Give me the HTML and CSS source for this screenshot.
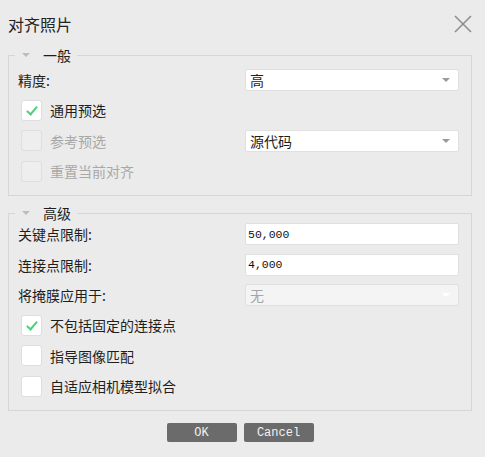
FILE: index.html
```html
<!DOCTYPE html>
<html lang="zh-CN">
<head>
    <meta charset="UTF-8">
    <meta name="viewport" content="width=device-width, initial-scale=1.0">
    <title>对齐照片</title>
    <link rel="stylesheet" href="styles.css">
</head>
<body>
    <div class="dialog">
        <div class="title-bar">
            <span class="title">对齐照片</span>
            <svg class="close" width="18" height="18" viewBox="0 0 18 18">
                <path d="M1 1 L17 17 M17 1 L1 17" stroke="#8a8a8a" stroke-width="1.5" fill="none"/>
            </svg>
        </div>

        <fieldset class="group">
            <legend><span class="arrow"></span>一般</legend>
            <div class="grid">
                <label class="label">精度:</label>
                <div class="combo"><span>高</span><span class="caret"></span></div>

                <div class="check-row span">
                    <span class="checkbox checked"></span>
                    <span>通用预选</span>
                </div>

                <div class="check-row disabled">
                    <span class="checkbox"></span>
                    <span>参考预选</span>
                </div>
                <div class="combo"><span>源代码</span><span class="caret"></span></div>

                <div class="check-row span disabled">
                    <span class="checkbox"></span>
                    <span>重置当前对齐</span>
                </div>
            </div>
        </fieldset>

        <fieldset class="group group-advanced">
            <legend><span class="arrow"></span>高级</legend>
            <div class="grid">
                <label class="label">关键点限制:</label>
                <div class="field">50,000</div>

                <label class="label">连接点限制:</label>
                <div class="field">4,000</div>

                <label class="label">将掩膜应用于:</label>
                <div class="combo combo-disabled"><span>无</span><span class="caret"></span></div>

                <div class="check-row span">
                    <span class="checkbox checked"></span>
                    <span>不包括固定的连接点</span>
                </div>
                <div class="check-row span">
                    <span class="checkbox"></span>
                    <span>指导图像匹配</span>
                </div>
                <div class="check-row span">
                    <span class="checkbox"></span>
                    <span>自适应相机模型拟合</span>
                </div>
            </div>
        </fieldset>

        <div class="buttons">
            <button>OK</button>
            <button>Cancel</button>
        </div>
    </div>
</body>
</html>
```

FILE: styles.css
```css
body {
    margin: 0;
    background-color: #ebebeb;
    font-family: "Noto Sans CJK SC", "Noto Sans", sans-serif;
    font-size: 14px;
    color: #1e1e1e;
}
.dialog {
    width: 485px;
    height: 457px;
    padding: 0 13px 0 8px;
    box-sizing: border-box;
}
.title-bar {
    display: flex;
    align-items: center;
    justify-content: space-between;
    height: 47px;
}
.title {
    font-size: 16px;
    color: #222;
}
.close {
    display: block;
}
.group {
    margin: 0 0 9px 0;
    padding: 6px 12px 13px 9px;
    border: 1px solid #d6d6d6;
    border-radius: 0;
}
.group-advanced {
    padding-top: 2px;
}
.group legend {
    margin-left: -3px;
    padding: 0 6px 0 7px;
    line-height: 16px;
    display: flex;
    align-items: center;
}
.arrow {
    width: 0;
    height: 0;
    border-left: 4px solid transparent;
    border-right: 4px solid transparent;
    border-top: 4px solid #bdbdbd;
    margin-right: 13px;
}
.grid {
    display: grid;
    grid-template-columns: 1fr 214px;
    grid-auto-rows: 22px;
    row-gap: 8.4px;
    align-items: center;
}
.span {
    grid-column: 1 / 3;
}
.label {
    line-height: 22px;
}
.combo, .field {
    height: 22px;
    box-sizing: border-box;
    background-color: #fff;
    border: 1px solid #e0e0e0;
    border-radius: 2px;
    display: flex;
    align-items: center;
}
.combo {
    justify-content: space-between;
    padding: 0 8px 0 4px;
}
.caret {
    width: 0;
    height: 0;
    border-left: 4px solid transparent;
    border-right: 4px solid transparent;
    border-top: 4px solid #9a9a9a;
}
.combo-disabled {
    background-color: #f4f4f4;
    color: #a5a5a5;
}
.combo-disabled .caret {
    border-top-color: #fff;
}
.field {
    padding: 0 2px;
    font-family: "Liberation Mono", monospace;
    font-size: 11.5px;
    color: #111;
}
.check-row {
    display: flex;
    align-items: center;
    gap: 8px;
    padding-left: 3px;
}
.checkbox {
    width: 21px;
    height: 21px;
    box-sizing: border-box;
    background-color: #fff;
    border: 1px solid #dedede;
    border-radius: 3px;
    position: relative;
}
.checked::after {
    content: "";
    position: absolute;
    left: 7px;
    top: 3px;
    width: 4px;
    height: 9px;
    border-right: 2px solid #4fcf7d;
    border-bottom: 2px solid #4fcf7d;
    transform: rotate(40deg);
}
.disabled {
    color: #a8a8a8;
}
.disabled .checkbox {
    background-color: #eeeeee;
}
.buttons {
    display: flex;
    justify-content: center;
    gap: 7px;
    margin-top: 12px;
}
button {
    width: 70px;
    height: 19px;
    padding: 0;
    border: none;
    border-radius: 2px;
    background-color: #6b6b6b;
    color: #f2f2f2;
    font-family: "Liberation Mono", monospace;
    font-size: 12px;
}
```
